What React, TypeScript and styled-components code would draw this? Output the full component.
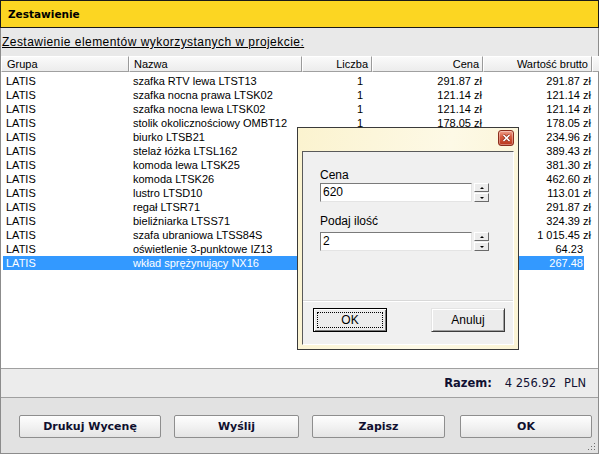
import styled, { createGlobalStyle, css } from 'styled-components';

const GlobalStyle = createGlobalStyle`
  html, body {
    margin: 0;
    padding: 0;
    background: #ffffff;
    overflow: hidden;
  }
  * {
    box-sizing: border-box;
  }
`;

const rows = [
  ['szafka RTV lewa LTST13', '1', '291.87 zł', '291.87 zł'],
  ['szafka nocna prawa LTSK02', '1', '121.14 zł', '121.14 zł'],
  ['szafka nocna lewa LTSK02', '1', '121.14 zł', '121.14 zł'],
  ['stolik okolicznościowy OMBT12', '1', '178.05 zł', '178.05 zł'],
  ['biurko LTSB21', '1', '234.96 zł', '234.96 zł'],
  ['stelaż łóżka LTSL162', '1', '389.43 zł', '389.43 zł'],
  ['komoda lewa LTSK25', '1', '381.30 zł', '381.30 zł'],
  ['komoda LTSK26', '1', '462.60 zł', '462.60 zł'],
  ['lustro LTSD10', '1', '113.01 zł', '113.01 zł'],
  ['regał LTSR71', '1', '291.87 zł', '291.87 zł'],
  ['bieliźniarka LTSS71', '1', '324.39 zł', '324.39 zł'],
  ['szafa ubraniowa LTSS84S', '1', '1 015.45 zł', '1 015.45 zł'],
  ['oświetlenie 3-punktowe IZ13', '1', '64.23', '64.23'],
  ['wkład sprężynujący NX16', '2', '133.74', '267.48'],
];

const SELECTED = 13;

export default function App() {
  return (
    <>
      <GlobalStyle />
      <StyledWindow>
        <StyledTitleBar>Zestawienie</StyledTitleBar>
        <StyledCaption>
          <span>Zestawienie elementów wykorzystanych w projekcie:</span>
        </StyledCaption>

        <StyledHeader>
          <StyledHeadCell $width={128}>Grupa</StyledHeadCell>
          <StyledHeadCell $width={173} $padLeft={4}>
            Nazwa
          </StyledHeadCell>
          <StyledHeadCell $width={70} $right>
            Liczba
          </StyledHeadCell>
          <StyledHeadCell $width={111} $right>
            Cena
          </StyledHeadCell>
          <StyledHeadCell $width={109} $right>
            Wartość brutto
          </StyledHeadCell>
          <StyledHeadCell $width={6} />
        </StyledHeader>

        <StyledList>
          {rows.map((row, i) => (
            <StyledRow key={i} $selected={i === SELECTED}>
              <StyledCell $padLeft={3}>LATIS</StyledCell>
              <StyledCell $padLeft={4}>{row[0]}</StyledCell>
              <StyledCell $right $padRight={9}>
                {row[1]}
              </StyledCell>
              <StyledCell $right $padRight={row[2].endsWith('zł') ? 1 : 9}>
                {row[2]}
              </StyledCell>
              <StyledCell $right $padRight={row[3].endsWith('zł') ? 1 : 9}>
                {row[3]}
              </StyledCell>
            </StyledRow>
          ))}
        </StyledList>

        <StyledSummary>
          <StyledSumLabel>Razem:</StyledSumLabel>
          <StyledSumValue>4 256.92</StyledSumValue>
          <StyledSumValue>PLN</StyledSumValue>
        </StyledSummary>

        <StyledFooter>
          <StyledButton $width={142}>Drukuj Wycenę</StyledButton>
          <StyledButton $width={125}>Wyślij</StyledButton>
          <StyledButton $width={133}>Zapisz</StyledButton>
          <StyledButton $width={132} $gapLeft={2}>
            OK
          </StyledButton>
          <StyledGrip width='10' height='10' viewBox='0 0 10 10'>
            {[
              [8, 0],
              [8, 3],
              [5, 3],
              [8, 6],
              [5, 6],
              [2, 6],
            ].map(([x, y]) => (
              <rect key={`${x}-${y}`} x={x} y={y + 2} width='1' height='1' fill='#6e6e6e' />
            ))}
          </StyledGrip>
        </StyledFooter>

        <StyledDialog>
          <StyledDialogTop>
            <StyledClose>
              <svg width='9' height='8' viewBox='0 0 9 8'>
                <path d='M1.5 1 L7.5 7 M7.5 1 L1.5 7' stroke='#8a2a1a' strokeWidth='3' />
                <path d='M1.5 1 L7.5 7 M7.5 1 L1.5 7' stroke='#ffffff' strokeWidth='1.6' />
              </svg>
            </StyledClose>
          </StyledDialogTop>
          <StyledPanel>
            <StyledFields>
              <StyledLabel>Cena</StyledLabel>
              <StyledInputRow>
                <StyledInput>620</StyledInput>
                <StyledSpin>
                  <StyledSpinButton>
                    <StyledArrow />
                  </StyledSpinButton>
                  <StyledSpinButton>
                    <StyledArrow $down />
                  </StyledSpinButton>
                </StyledSpin>
              </StyledInputRow>
              <StyledLabel $spaced>Podaj ilość</StyledLabel>
              <StyledInputRow>
                <StyledInput>2</StyledInput>
                <StyledSpin>
                  <StyledSpinButton>
                    <StyledArrow />
                  </StyledSpinButton>
                  <StyledSpinButton>
                    <StyledArrow $down />
                  </StyledSpinButton>
                </StyledSpin>
              </StyledInputRow>
            </StyledFields>
            <StyledDialogButtons>
              <StyledDialogButton $default>
                <span>OK</span>
              </StyledDialogButton>
              <StyledDialogButton>
                <span>Anuluj</span>
              </StyledDialogButton>
            </StyledDialogButtons>
          </StyledPanel>
        </StyledDialog>
      </StyledWindow>
    </>
  );
}

const StyledWindow = styled.div`
  position: relative;
  width: 599px;
  height: 454px;
  display: flex;
  flex-direction: column;
  border: 1px solid #8c8c8c;
  border-top: none;
  background: #e9e9e9;
  font-family: 'Liberation Sans', Arial, sans-serif;
  font-size: 11px;
  color: #000000;
`;

const StyledTitleBar = styled.div`
  height: 28px;
  margin: 0 -1px;
  display: flex;
  align-items: center;
  padding-left: 7px;
  background: #fcd622;
  border: 1px solid #1a1a1a;
  font-family: 'DejaVu Sans', Verdana, sans-serif;
  font-weight: bold;
  font-size: 10.5px;
  color: #000000;
`;

const StyledCaption = styled.div`
  height: 28px;
  display: flex;
  align-items: center;
  padding: 0 0 0 1px;
  background: #e9e9e9;
  font-size: 12px;
  letter-spacing: 0.45px;

  span {
    text-decoration: underline;
  }
`;

const StyledHeader = styled.div`
  display: flex;
  height: 16px;
  background: #ffffff;
`;

const StyledHeadCell = styled.div`
  flex: none;
  width: ${({ $width }) => $width}px;
  height: 16px;
  line-height: 14px;
  padding: 0 3px 0 ${({ $padLeft }) => $padLeft ?? 5}px;
  background: linear-gradient(#fafafa, #ececec);
  border-top: 1px solid #ffffff;
  border-left: 1px solid #ffffff;
  border-right: 1px solid #9a9a9a;
  border-bottom: 1px solid #a0a0a0;
  white-space: nowrap;
  ${({ $right }) =>
    $right &&
    css`
      text-align: right;
    `}
`;

const StyledList = styled.div`
  flex: 1;
  background: #ffffff;
  padding: 2px 0 0 2px;
  border-bottom: 1px solid #a0a0a0;
`;

const StyledRow = styled.div`
  display: grid;
  grid-template-columns: 126px 173px 70px 111px 109px;
  width: 581px;
  height: 14px;
  line-height: 14px;
  white-space: nowrap;
  ${({ $selected }) =>
    $selected &&
    css`
      background: #3399ff;
      color: #ffffff;
    `}
`;

const StyledCell = styled.div`
  overflow: visible;
  padding-left: ${({ $padLeft }) => $padLeft ?? 0}px;
  padding-right: ${({ $padRight }) => $padRight ?? 0}px;
  ${({ $right }) =>
    $right &&
    css`
      text-align: right;
    `}
`;

const StyledSummary = styled.div`
  height: 29px;
  display: flex;
  align-items: center;
  justify-content: flex-end;
  gap: 8px;
  padding-right: 12px;
  background: #ececec;
  border-bottom: 1px solid #a0a0a0;
  font-family: 'DejaVu Sans', Verdana, sans-serif;
  font-size: 11.5px;
  color: #111133;
`;

const StyledSumLabel = styled.span`
  font-weight: bold;
  margin-right: 5px;
`;

const StyledSumValue = styled.span``;

const StyledFooter = styled.div`
  position: relative;
  height: 55px;
  display: flex;
  align-items: center;
  gap: 13px;
  padding: 1px 0 0 18px;
  background: #e2e2e2;
`;

const StyledButton = styled.div`
  width: ${({ $width }) => $width}px;
  height: 23px;
  margin-left: ${({ $gapLeft }) => $gapLeft ?? 0}px;
  display: flex;
  align-items: center;
  justify-content: center;
  background: linear-gradient(#fefefe, #f2f2f2 50%, #e4e4e4);
  border: 1px solid #8e8e8e;
  border-radius: 2px;
  font-family: 'DejaVu Sans', Verdana, sans-serif;
  font-weight: bold;
  font-size: 11px;
  color: #0f0f2e;
`;

const StyledGrip = styled.svg`
  position: absolute;
  right: 2px;
  bottom: 2px;
`;

const StyledDialog = styled.div`
  position: absolute;
  left: 296px;
  top: 127px;
  width: 222px;
  height: 223px;
  display: flex;
  flex-direction: column;
  padding: 0 4px 4px 4px;
  background: linear-gradient(100deg, #fbf3cf, #fdf9e6 60%, #fbf4d4);
  border: 1px solid #3a3a3a;
`;

const StyledDialogTop = styled.div`
  height: 23px;
  display: flex;
  justify-content: flex-end;
  align-items: flex-start;
  padding-top: 2px;
`;

const StyledClose = styled.div`
  width: 16px;
  height: 16px;
  display: flex;
  align-items: center;
  justify-content: center;
  background: linear-gradient(#f0a08c, #d65a3e 45%, #b8351c);
  border: 1px solid #8c2d1c;
  border-radius: 3px;
  box-shadow: inset 0 0 0 1px rgba(255, 255, 255, 0.35);
`;

const StyledPanel = styled.div`
  flex: 1;
  display: flex;
  flex-direction: column;
  background: #f0f0f0;
  border-top: 1px solid #5a5a5a;
  border-left: 1px solid #5a5a5a;
  border-right: 1px solid #ffffff;
  border-bottom: 1px solid #ffffff;
  font-size: 12px;
`;

const StyledFields = styled.div`
  flex: 1;
  display: flex;
  flex-direction: column;
  padding: 16px 0 0 17px;
`;

const StyledLabel = styled.div`
  height: 14px;
  line-height: 14px;
  margin-bottom: 1px;
  ${({ $spaced }) =>
    $spaced &&
    css`
      margin-top: 12px;
      margin-bottom: 4px;
    `}
`;

const StyledInputRow = styled.div`
  display: flex;
  align-items: center;
  gap: 2px;
`;

const StyledInput = styled.div`
  width: 152px;
  height: 19px;
  line-height: 17px;
  padding-left: 2px;
  background: #ffffff;
  border-top: 1px solid #7a7a7a;
  border-left: 1px solid #7a7a7a;
  border-right: 1px solid #e4e4e4;
  border-bottom: 1px solid #e4e4e4;
`;

const StyledSpin = styled.div`
  display: flex;
  flex-direction: column;
  gap: 1px;
`;

const StyledSpinButton = styled.div`
  width: 15px;
  height: 9px;
  display: flex;
  align-items: center;
  justify-content: center;
  background: #ececec;
  border-top: 1px solid #ffffff;
  border-left: 1px solid #ffffff;
  border-right: 1px solid #6a6a6a;
  border-bottom: 1px solid #6a6a6a;
`;

const StyledArrow = styled.div`
  width: 0;
  height: 0;
  border-left: 2px solid transparent;
  border-right: 2px solid transparent;
  ${({ $down }) =>
    $down
      ? css`
          border-top: 2px solid #000000;
        `
      : css`
          border-bottom: 2px solid #000000;
        `}
`;

const StyledDialogButtons = styled.div`
  height: 43px;
  display: flex;
  justify-content: space-between;
  align-items: flex-start;
  padding: 6px 8px 0 10px;
  border-top: 1px solid #ffffff;
  box-shadow: 0 -1px 0 #d8d8d8;
`;

const StyledDialogButton = styled.div`
  width: 74px;
  height: 24px;
  display: flex;
  align-items: center;
  justify-content: center;
  background: #ececec;
  border-top: 1px solid #e4e4e4;
  border-left: 1px solid #e4e4e4;
  border-right: 1px solid #3c3c3c;
  border-bottom: 1px solid #3c3c3c;
  box-shadow: inset 1px 1px 0 #ffffff, inset -1px -1px 0 #a0a0a0;
  font-size: 12px;

  span {
    padding: 0 6px;
  }

  ${({ $default }) =>
    $default &&
    css`
      border: 1px solid #000000;
      box-shadow: inset 1px 1px 0 #ffffff, inset -1px -1px 0 #7a7a7a;

      span {
        width: 66px;
        height: 16px;
        line-height: 14px;
        text-align: center;
        border: 1px dotted #000000;
      }
    `}
`;
